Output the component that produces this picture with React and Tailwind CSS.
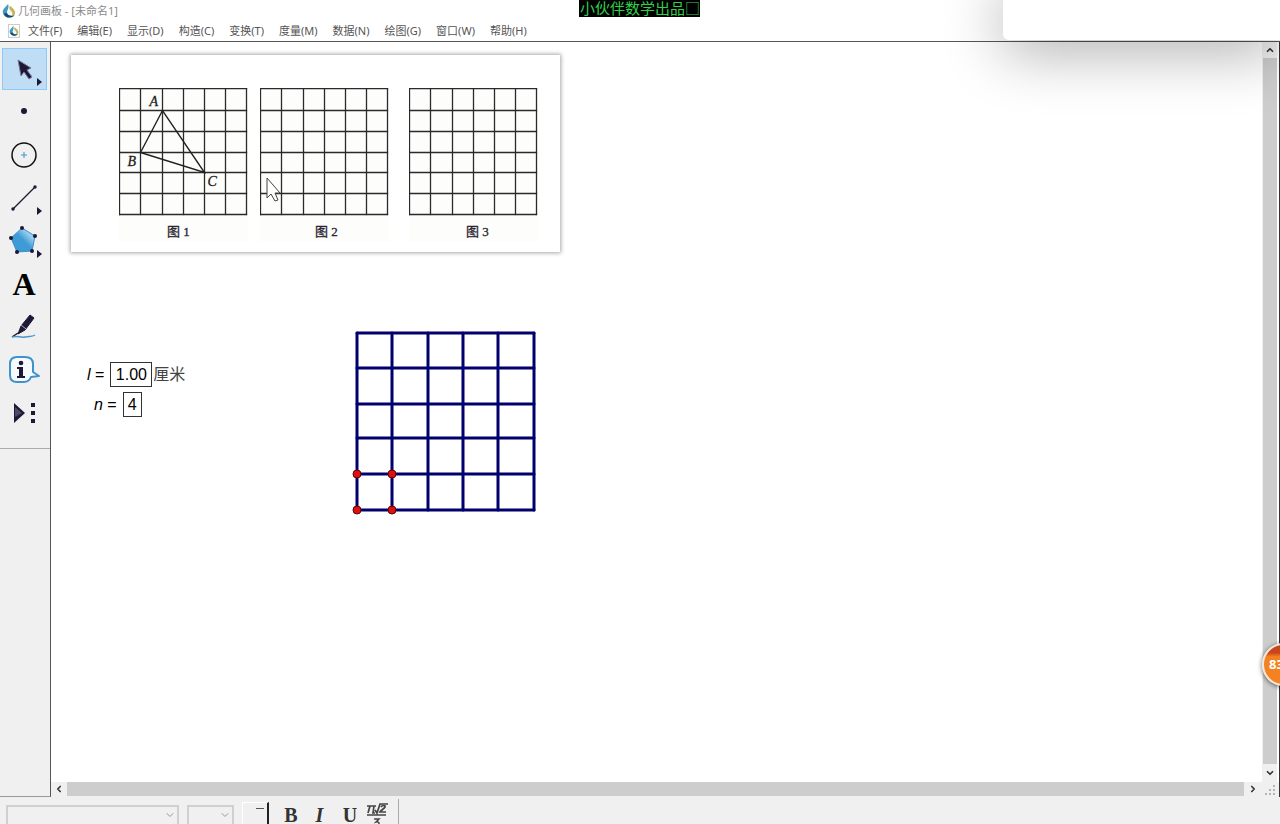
import { useState } from "react";
import { ChevronDown, ChevronLeft, ChevronRight, ChevronUp } from "lucide-react";

const menus = [
  "文件(F)",
  "编辑(E)",
  "显示(D)",
  "构造(C)",
  "变换(T)",
  "度量(M)",
  "数据(N)",
  "绘图(G)",
  "窗口(W)",
  "帮助(H)",
];

const INK = "#1c1836";

function Logo({ className }) {
  return (
    <svg viewBox="0 0 16 16" className={className} aria-hidden="true">
      <path d="M7 0C4 4 0 6 1 10c1 5 7 7 11 4-5 0-7-3-6-6 1-3 2-4 1-8z" fill="#3f9cc0" />
      <path d="M9 2c3 2 6 5 6 8 0 3-2 5-5 5 3-3 2-5 0-7-2-2-2-4-1-6z" fill="#c3b65a" />
      <path d="M2 11c2 5 8 6 12 2-4 1-7 0-9-3z" fill="#1b4c74" />
      <circle cx="9" cy="9" r="2" fill="#e9f6fb" />
    </svg>
  );
}

// little triangle that marks a tool with a flyout
function Flyout() {
  return <path d="M34 30l5 4-5 4z" fill={INK} />;
}

const tools = [
  {
    name: "选择",
    art: (
      <>
        <path d="M15 12l13 8-4 2 5 7-3 2-5-7-3 4z" fill={INK} stroke="#77779a" strokeWidth="1" />
        <Flyout />
      </>
    ),
  },
  { name: "点", art: <circle cx="21" cy="20" r="3" fill={INK} /> },
  {
    name: "圆",
    art: (
      <>
        <circle cx="21" cy="21" r="12" fill="none" stroke="#111" strokeWidth="1.5" />
        <path d="M18 21h6M21 18v6" stroke="#3f92c8" />
      </>
    ),
  },
  {
    name: "线段",
    art: (
      <>
        <path d="M10 32L32 10" stroke={INK} strokeWidth="1.3" />
        <circle cx="10" cy="32" r="1.7" fill={INK} />
        <circle cx="32" cy="10" r="1.7" fill={INK} />
        <Flyout />
      </>
    ),
  },
  {
    name: "多边形",
    art: (
      <>
        <defs>
          <linearGradient id="poly" x1="0" y1="1" x2="1" y2="0">
            <stop offset="0.5" stopColor="#3f9bd6" />
            <stop offset="0.75" stopColor="#9ad0f0" />
            <stop offset="1" stopColor="#3f9bd6" />
          </linearGradient>
        </defs>
        <path d="M19 8l13 8-3 15-15 1-6-14z" fill="url(#poly)" stroke="#3b8fc4" />
        {[
          [19, 8],
          [32, 16],
          [29, 31],
          [14, 32],
          [8, 18],
        ].map(([x, y]) => (
          <circle key={x} cx={x} cy={y} r="2" fill={INK} />
        ))}
        <Flyout />
      </>
    ),
  },
  { name: "文字", letter: "A" },
  {
    name: "标记",
    art: (
      <>
        <path d="M27 9l4 3-9 12-7 4 3-8z" fill={INK} stroke={INK} strokeLinejoin="round" />
        <path d="M18 19l5 4" stroke="#aaa9c0" />
        <path d="M15 27l-6 4" stroke={INK} strokeWidth="1.5" />
        <path d="M9 31c5-2 8 1 13 0s7 0 10-2" fill="none" stroke="#4a97cc" strokeWidth="1.5" />
      </>
    ),
  },
  {
    name: "信息",
    art: (
      <>
        <path
          d="M14 8h8q8 0 8 7v8l6 4-8 1q-2 5-7 5h-7q-7 0-7-7V15q0-7 7-7z"
          fill="#f6fafd"
          stroke="#3f92cc"
          strokeWidth="2"
          strokeLinejoin="round"
        />
        <circle cx="18" cy="14" r="2.3" fill={INK} />
        <path d="M14 18h6v9h2v2h-8v-2h2v-7h-2z" fill={INK} />
      </>
    ),
  },
  {
    name: "自定义工具",
    art: (
      <>
        <path d="M11 11l11 10-11 10z" fill={INK} />
        <path d="M12 15l7 6-7 4z" fill="#4d4a66" />
        <path d="M28 11h4v4h-4zM28 19h4v4h-4zM28 27h4v4h-4z" fill={INK} />
      </>
    ),
  },
];

const gridX = [1, 22, 44, 65, 86, 107, 128];
const gridY = [1, 23, 44, 65, 85, 106, 127];

function Figure({ caption, captionX, children }) {
  return (
    <svg width="130" height="154" viewBox="0.5 0.5 130 154" className="block shrink-0">
      <rect width="130" height="156" fill="#fdfdfc" />
      {gridX.map((x) => (
        <path key={x} d={`M${x} 1V127`} stroke="#2a2a2a" strokeWidth="1.3" strokeLinecap="square" />
      ))}
      {gridY.map((y) => (
        <path key={y} d={`M1 ${y}H128`} stroke="#2a2a2a" strokeWidth="1.3" strokeLinecap="square" />
      ))}
      {children}
      <text
        x={captionX}
        y="148"
        textAnchor="middle"
        fill="#2b2430"
        stroke="#2b2430"
        strokeWidth="0.3"
        className="font-['Liberation_Serif','Noto_Sans_CJK_SC',serif] text-[13px]"
      >
        {caption}
      </text>
    </svg>
  );
}

function Worksheet() {
  return (
    <div className="absolute left-5 top-[13px] flex bg-white pb-[10px] pl-12 pr-[21px] pt-[33px] shadow-[0_0_4px_1px_rgba(0,0,0,0.35)]">
      <Figure caption="图 1" captionX="60">
        <path d="M44 23L22 65L86 85Z" fill="none" stroke="#222" strokeWidth="1.4" />
        <g
          fill="#222"
          stroke="#222"
          strokeWidth="0.3"
          className="font-['Liberation_Serif',serif] text-[14px] italic"
        >
          <text x="31" y="18">A</text>
          <text x="9" y="78">B</text>
          <text x="89" y="98">C</text>
        </g>
      </Figure>
      <div className="ml-[11px] mr-[19px]">
        <Figure caption="图 2" captionX="67" />
      </div>
      <Figure caption="图 3" captionX="69" />
    </div>
  );
}

const blueX = [7, 42, 78, 113, 148, 184];
const blueY = [7, 42, 78, 112, 148, 184];

function BlueGrid() {
  return (
    <svg width="192" height="192" className="absolute left-[299px] top-[284px]">
      <g stroke="#00006e" strokeWidth="3" strokeLinecap="round">
        {blueX.map((x) => (
          <path key={x} d={`M${x} 7V184`} />
        ))}
        {blueY.map((y) => (
          <path key={y} d={`M7 ${y}H184`} />
        ))}
      </g>
      <g fill="#e01010" stroke="#5c0000">
        <circle cx="7" cy="148" r="4" />
        <circle cx="42" cy="148" r="4" />
        <circle cx="7" cy="184" r="4" />
        <circle cx="42" cy="184" r="4" />
      </g>
    </svg>
  );
}

function Params() {
  const [l, setL] = useState("1.00");
  const [n, setN] = useState("4");
  return (
    <div className="absolute left-9 top-80 flex flex-col gap-[5px] font-['Liberation_Sans','Noto_Sans_CJK_SC',sans-serif] text-base text-black">
      <div className="flex items-center">
        <label htmlFor="l" className="mr-[6px]">
          <i>l</i> =
        </label>
        <input
          id="l"
          value={l}
          onChange={(e) => setL(e.target.value)}
          className="h-[25px] w-[42px] border border-[#333] bg-white text-center"
        />
        <span className="ml-px text-[#444]">厘米</span>
      </div>
      <div className="flex items-center pl-[7px]">
        <label htmlFor="n" className="mr-[6px]">
          <i>n</i> =
        </label>
        <input
          id="n"
          value={n}
          onChange={(e) => setN(e.target.value)}
          className="h-[25px] w-[19px] border border-[#333] bg-white text-center"
        />
      </div>
    </div>
  );
}

function Toolbox() {
  const [active, setActive] = useState(0);
  return (
    <aside className="flex w-[51px] shrink-0 flex-col border-b border-r border-b-[#999] border-r-[#555] bg-[#f0f0f0]">
      <div className="flex flex-col gap-px border-b border-[#aaa] pb-[14px] pl-[2px] pt-[6px]">
        {tools.map((tool, i) => (
          <button
            key={tool.name}
            aria-label={tool.name}
            onClick={() => setActive(i)}
            className={`flex h-[42px] w-[45px] items-center border ${
              i === active ? "border-[#90c8f6] bg-[#bfddf5]" : "border-transparent"
            }`}
          >
            {tool.letter ? (
              <span className="w-[42px] text-center font-['Liberation_Serif',serif] text-[32px] font-bold leading-none text-black">
                {tool.letter}
              </span>
            ) : (
              <svg viewBox="0 0 42 42" className="h-[42px] w-[42px] shrink-0">
                {tool.art}
              </svg>
            )}
          </button>
        ))}
      </div>
    </aside>
  );
}

function FormatBar() {
  return (
    <footer className="flex h-[27px] shrink-0 items-start bg-[#f0f0f0] pl-[6px] text-[#333]">
      <div className="relative mt-2 w-[173px]">
        <select
          aria-label="字体"
          className="h-6 w-full appearance-none border-2 border-[#d0d0d0] bg-[#f0f0f0]"
        />
        <ChevronDown className="pointer-events-none absolute right-[3px] top-1 h-3 w-3 text-[#999]" />
      </div>
      <div className="relative ml-2 mt-2 w-[47px]">
        <select
          aria-label="字号"
          className="h-6 w-full appearance-none border-2 border-[#d0d0d0] bg-[#f0f0f0]"
        />
        <ChevronDown className="pointer-events-none absolute right-[3px] top-1 h-3 w-3 text-[#999]" />
      </div>
      <button
        aria-label="颜色"
        className="ml-2 mt-[5px] flex h-8 w-[27px] justify-end border-l border-r-2 border-t border-l-white border-r-[#222] border-t-white pr-[3px] pt-[5px]"
      >
        <span className="h-px w-2 bg-[#555]" />
      </button>
      <div className="mt-[9px] flex font-['Liberation_Serif',serif] text-xl font-bold leading-[18px]">
        <button className="ml-2 w-7">B</button>
        <button className="w-[29px] italic">I</button>
        <button className="w-8">U</button>
      </div>
      <button aria-label="数学符号" className="mt-[5px] h-8 w-[26px]">
        <svg viewBox="0 0 26 32" className="h-8 w-[26px]">
          <g fill="none" stroke="#444" strokeWidth="1.7">
            <path d="M1 4h9M4 4l-2 7M8 4l-1 7h2M9 8l2 3 3-9h8M1 13h19" />
            <path d="M15 5c1-2 5-2 4 0-1 2-4 3-5 5h6" />
          </g>
          <path d="M8 17h5l-3 3c4-1 4 4 0 4" fill="none" stroke="#444" strokeWidth="1.5" />
        </svg>
      </button>
      <div className="ml-[6px] mt-[2px] h-8 border-l border-[#aaa]" />
    </footer>
  );
}

function FloatingPanel() {
  return (
    <div className="pointer-events-none absolute inset-0 overflow-hidden">
      <div className="absolute -top-5 right-0 h-[60px] w-[277px] rounded-bl-md bg-white shadow-[0_12px_60px_rgba(0,0,0,0.32)]" />
    </div>
  );
}

export default function App() {
  return (
    <div className="relative flex h-screen flex-col overflow-hidden bg-white font-['Noto_Sans','Noto_Sans_CJK_SC',sans-serif]">
      <header className="flex h-[42px] shrink-0 flex-col border-b border-[#555] bg-white text-[11px] leading-4">
        <div className="flex items-center gap-[2px] pl-[2px] pt-[3px] text-[#8c8c8c]">
          <Logo className="h-[14px] w-[14px]" />
          <h1>几何画板 - [未命名1]</h1>
        </div>
        <nav className="flex items-center gap-[15px] pl-2 pt-1 text-[#555]">
          <span className="-mr-[7px] flex h-[14px] w-3 items-center justify-center border border-[#ccc] bg-white">
            <Logo className="h-[10px] w-[10px]" />
          </span>
          {menus.map((menu) => (
            <button key={menu}>{menu}</button>
          ))}
        </nav>
      </header>

      <div className="flex min-h-0 flex-1 border-r border-[#333]">
        <Toolbox />
        <div className="flex min-w-0 flex-1 flex-col">
          <div className="flex min-h-0 flex-1">
            <main className="relative min-w-0 flex-1 overflow-hidden bg-white">
              <Worksheet />
              <svg width="16" height="26" className="absolute left-[214px] top-[134px]">
                <path
                  d="M2 2v20l4-4 4 7 3-1-3-7h5z"
                  fill="#fff"
                  stroke="#444"
                  strokeWidth="1"
                />
              </svg>
              <Params />
              <BlueGrid />
            </main>
            <div className="mr-[2px] flex w-[15px] shrink-0 flex-col items-center bg-[#f0f0f0] text-[#333]">
              <button aria-label="向上滚动" className="flex h-4 items-center">
                <ChevronUp className="h-[10px] w-[10px]" strokeWidth={4} />
              </button>
              <div className="w-[14px] flex-1 bg-[#cdcdcd]" />
              <button aria-label="向下滚动" className="flex h-[18px] items-center">
                <ChevronDown className="h-[10px] w-[10px]" strokeWidth={4} />
              </button>
            </div>
          </div>
          <div className="flex h-[15px] shrink-0 items-start bg-[#f0f0f0] text-[#333]">
            <button aria-label="向左滚动" className="flex h-[14px] w-4 items-center justify-center">
              <ChevronLeft className="h-[10px] w-[10px]" strokeWidth={4} />
            </button>
            <div className="h-[14px] flex-1 bg-[#cdcdcd]" />
            <button aria-label="向右滚动" className="flex h-[14px] w-[18px] items-center justify-center">
              <ChevronRight className="h-[10px] w-[10px]" strokeWidth={4} />
            </button>
            <svg width="17" height="14">
              <path
                d="M11 3h2v2h-2zM7 7h2v2H7zM11 7h2v2h-2zM3 11h2v2H3zM7 11h2v2H7zM11 11h2v2h-2z"
                fill="#b5b5b5"
              />
            </svg>
          </div>
        </div>
      </div>

      <FormatBar />

      <FloatingPanel />
      <div className="absolute left-[579px] top-0 bg-black pb-px pl-px font-['Noto_Sans_CJK_SC',sans-serif] text-[15px] leading-4 text-[#2fd04a]">
        小伙伴数学出品□
      </div>
      <button className="absolute -right-[25px] top-[643px] h-[43px] w-[43px] rounded-full border-2 border-[#f5e6d8] bg-linear-to-b from-[#c8461a] from-20% to-[#f58220] to-30% pl-[5px] text-left text-[13px] font-bold text-white shadow-[0_1px_5px_rgba(0,0,0,0.6)]">
        83
      </button>
    </div>
  );
}
